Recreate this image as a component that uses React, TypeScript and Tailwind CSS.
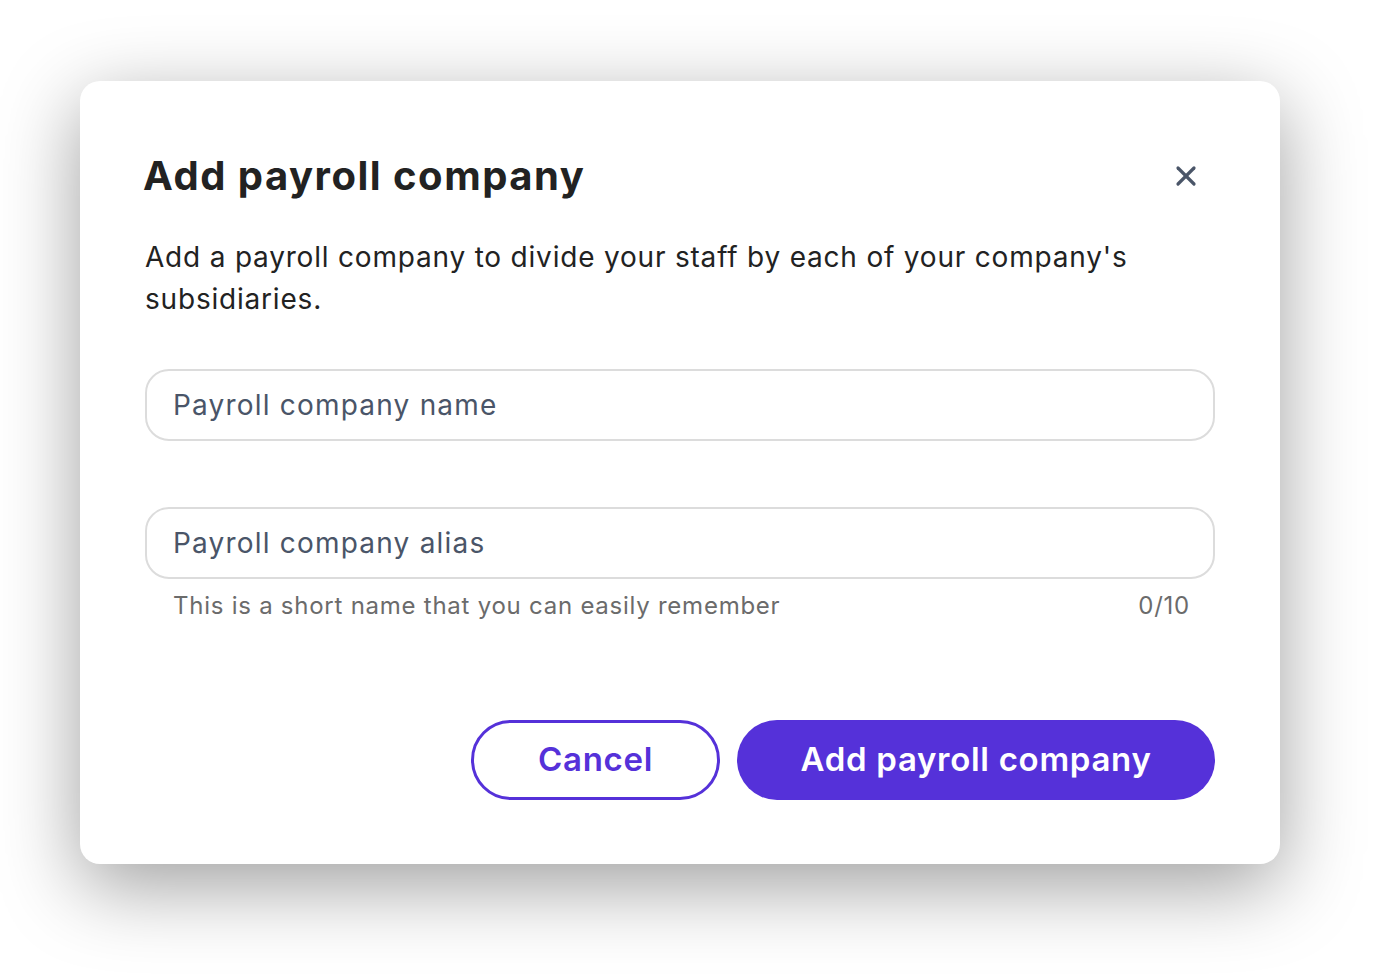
import { X } from 'lucide-react';

const font = "font-['Inter','Noto_Sans',sans-serif]";

function Field({ placeholder }: { placeholder: string }) {
  return (
    <input
      type="text"
      placeholder={placeholder}
      className={`w-full h-[72px] rounded-[24px] border-2 border-[#dcdcdc] bg-white px-[26px] text-[28px] tracking-[1.2px] text-[#4a5568] placeholder:text-[#4a5568] outline-none ${font}`}
    />
  );
}

export default function App() {
  return (
    <div className={`min-h-screen bg-white pt-[81px] pl-[80px] ${font}`}>
      <div className="w-[1200px] h-[783px] rounded-[20px] bg-white shadow-[0_22px_80px_rgba(0,0,0,0.38)] px-[65px] pt-[60px]">
        <div className="flex items-center justify-between h-[70px]">
          <h1 className="text-[40px] font-bold text-[#222222] tracking-[1.5px] -ml-[2px]">Add payroll company</h1>
          <button className="mr-[13px] text-[#4a5568]">
            <X size={32} strokeWidth={2.4} />
          </button>
        </div>

        <p className="mt-[25px] text-[28px] leading-[42px] tracking-[0.8px] text-[#222222] pr-[60px]">
          Add a payroll company to divide your staff by each of your company's subsidiaries.
        </p>

        <div className="mt-[49px]">
          <Field placeholder="Payroll company name" />
        </div>

        <div className="mt-[66px]">
          <Field placeholder="Payroll company alias" />
          <div className="flex justify-between pl-[28px] pr-[25px] mt-[10px] text-[24px] leading-[34px] tracking-[0.75px] text-[#6b6b6b]">
            <span>This is a short name that you can easily remember</span>
            <span>0/10</span>
          </div>
        </div>

        <div className="flex justify-end gap-[17px] mt-[97px]">
          <button className="w-[249px] h-[80px] rounded-full border-[3px] border-[#5531d9] text-[#5531d9] text-[33px] tracking-[0.7px] font-semibold">
            Cancel
          </button>
          <button className="w-[478px] h-[80px] rounded-full bg-[#5531d9] text-white text-[33px] tracking-[0.7px] font-semibold">
            Add payroll company
          </button>
        </div>
      </div>
    </div>
  );
}
